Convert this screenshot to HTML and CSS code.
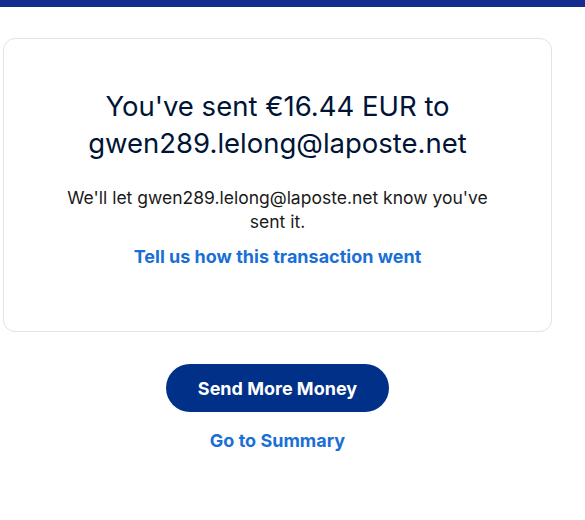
FILE: index.html
```html
<!DOCTYPE html>
<html lang="en">
<head>
<meta charset="utf-8">
<link rel="stylesheet" href="styles.css">
</head>
<body>
<div class="topbar"></div>
<main class="page">
  <section class="card">
    <h1 class="title">You've sent €16.44 EUR to gwen289.lelong@laposte.net</h1>
    <p class="note">We'll let gwen289.lelong@laposte.net know you've sent it.</p>
    <a class="link" href="#">Tell us how this transaction went</a>
  </section>
  <div class="actions">
    <a class="btn" href="#">Send More Money</a>
    <a class="link" href="#">Go to Summary</a>
  </div>
</main>
</body>
</html>
```
FILE: styles.css
```css
* { box-sizing: border-box; }
html, body { margin: 0; padding: 0; background: #fff; }
body {
  font-family: Inter, "Noto Sans", "Liberation Sans", sans-serif;
  color: #001435;
}
.topbar { height: 7px; background: #142c8e; }
.page {
  width: 549px;
  margin: 31px 0 0 3px;
}
.card {
  border: 1px solid #e3e3e3;
  border-radius: 12px;
  padding: 49px 40px 62px;
  display: flex;
  flex-direction: column;
  align-items: center;
  text-align: center;
}
.title {
  margin: 0;
  font-size: 27.5px;
  font-weight: 400;
  line-height: 37px;
  max-width: 440px;
}
.note {
  margin: 24px 0 0;
  font-size: 17.5px;
  line-height: 24px;
  max-width: 435px;
  color: #1a1a1a;
}
.link {
  display: block;
  font-size: 18px;
  line-height: 24px;
  font-weight: 700;
  color: #1a6fd6;
  text-decoration: none;
  margin-top: 11px;
}
.actions {
  display: flex;
  flex-direction: column;
  align-items: center;
  margin-top: 32px;
}
.btn {
  width: 223px;
  height: 48px;
  border-radius: 24px;
  background: #003087;
  color: #fff;
  font-size: 18px;
  font-weight: 700;
  text-decoration: none;
  display: flex;
  align-items: center;
  justify-content: center;
}
.actions .link { margin-top: 17px; }
```
